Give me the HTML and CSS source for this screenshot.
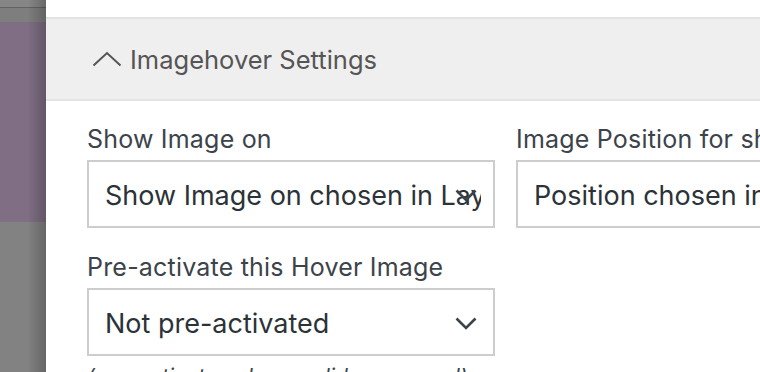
FILE: index.html
```html
<!DOCTYPE html>
<html lang="en">
<head>
<meta charset="utf-8">
<title>Imagehover Settings</title>
<link rel="stylesheet" href="styles.css">
</head>
<body>
<div class="backdrop">
  <div class="bd-top"></div>
  <div class="bd-line"></div>
  <div class="bd-bar"></div>
  <div class="bd-purple"></div>
  <div class="bd-rest"></div>
</div>
<main class="panel">
  <div class="section-header">
    <svg class="chev-up" width="30" height="16" viewBox="0 0 30 16" aria-hidden="true">
      <path d="M1.5 14.5 L15 2 L28.5 14.5" fill="none" stroke="#555" stroke-width="2"/>
    </svg>
    <span class="section-title">Imagehover Settings</span>
  </div>
  <div class="form">
    <div class="field">
      <label class="label">Show Image on</label>
      <div class="select">
        <span class="select-text">Show Image on chosen in Layout</span>
        <svg class="chev-down" width="22" height="13" viewBox="0 0 22 13" aria-hidden="true">
          <path d="M1.5 1.5 L11 11 L20.5 1.5" fill="none" stroke="#3c434a" stroke-width="2.6"/>
        </svg>
      </div>
    </div>
    <div class="field">
      <label class="label">Image Position for show</label>
      <div class="select">
        <span class="select-text">Position chosen in Layout</span>
      </div>
    </div>
    <div class="field">
      <label class="label">Pre-activate this Hover Image</label>
      <div class="select">
        <span class="select-text">Not pre-activated</span>
        <svg class="chev-down" width="22" height="13" viewBox="0 0 22 13" aria-hidden="true">
          <path d="M1.5 1.5 L11 11 L20.5 1.5" fill="none" stroke="#3c434a" stroke-width="2.6"/>
        </svg>
      </div>
      <p class="hint">(pre-activate only one slide per panel)</p>
    </div>
  </div>
</main>
</body>
</html>
```
FILE: styles.css
```css
html, body {
  margin: 0;
  padding: 0;
  height: 100%;
}
body {
  display: flex;
  overflow: hidden;
  background: #fff;
  font-family: Inter, "Noto Sans", sans-serif;
}
.backdrop {
  width: 46px;
  flex: 0 0 46px;
  display: flex;
  flex-direction: column;
  position: relative;
}
.backdrop::after {
  content: "";
  position: absolute;
  inset: 0;
  background: linear-gradient(to right, rgba(0,0,0,0) 60%, rgba(0,0,0,0.22) 100%);
}
.bd-top { height: 7px; background: #868686; }
.bd-line { height: 1px; background: #636363; }
.bd-bar { height: 14px; background: #7e7e7e; }
.bd-purple { height: 200px; background: #7f6e84; }
.bd-rest { flex: 1; background: #828282; }

.panel {
  flex: 1;
  background: #fff;
  padding-top: 17px;
  min-width: 0;
  overflow: hidden;
}
.section-header {
  height: 80px;
  border-top: 2px solid #e3e3e3;
  border-bottom: 2px solid #e3e3e3;
  background: #efefef;
  display: flex;
  align-items: center;
  padding-left: 46px;
  gap: 8px;
}
.chev-up { display: block; margin-top: -1px; }
.section-title {
  font-size: 25.5px;
  color: #555;
}
.form {
  padding: 23px 0 0 41px;
  display: grid;
  grid-template-columns: 408px 408px;
  column-gap: 21px;
  row-gap: 24px;
}
.label {
  display: block;
  font-size: 25px;
  letter-spacing: 0.2px;
  line-height: 30px;
  color: #3c434a;
  margin-bottom: 6px;
  white-space: nowrap;
}
.select {
  height: 64px;
  border: 2px solid #cdcdcd;
  display: flex;
  align-items: center;
  position: relative;
  padding: 0 12px 0 16px;
}
.select-text {
  font-size: 27px;
  color: #2c3338;
  white-space: nowrap;
  overflow: hidden;
  flex: 1;
  min-width: 0;
  padding-top: 2px;
}
.chev-down {
  position: absolute;
  right: 16px;
  top: 27px;
}
.hint {
  margin: 8px 0 0;
  font-size: 21px;
  line-height: 25px;
  font-style: italic;
  color: #3c434a;
  white-space: nowrap;
}
```
